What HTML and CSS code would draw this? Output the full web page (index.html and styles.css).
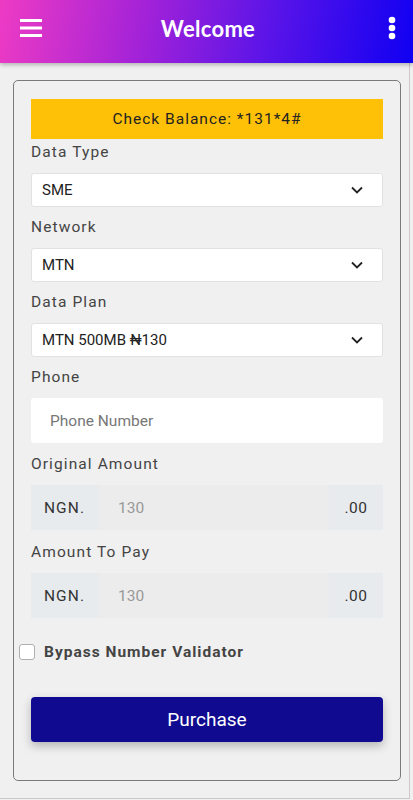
FILE: index.html
```html
<!DOCTYPE html>
<html lang="en">
  <head>
    <meta charset="UTF-8" />
    <meta name="viewport" content="width=device-width, initial-scale=1.0" />
    <title>Buy Data</title>
    <link rel="stylesheet" href="styles.css">
  </head>
  <body>
    <header class="topbar">
      <span class="menu-btn">
        <svg width="22" height="22" viewBox="0 0 22 22">
          <rect x="0" y="2" width="22" height="3" fill="#fff" />
          <rect x="0" y="9.5" width="22" height="3" fill="#fff" />
          <rect x="0" y="17" width="22" height="3" fill="#fff" />
        </svg>
      </span>
      <h1 class="title">Welcome</h1>
      <span class="more-btn">
        <svg width="8" height="24" viewBox="0 0 8 24">
          <circle cx="4" cy="4" r="3.3" fill="#fff" />
          <circle cx="4" cy="12" r="3.3" fill="#fff" />
          <circle cx="4" cy="20" r="3.3" fill="#fff" />
        </svg>
      </span>
    </header>

    <div class="content">
      <form class="card">
        <div class="balance">Check Balance: *131*4#</div>

        <label class="field-label">Data Type</label>
        <div class="select">
          <span>SME</span>
          <svg class="chevron" width="12" height="8" viewBox="0 0 12 8">
            <path d="M1 1.5 L6 6.5 L11 1.5" fill="none" stroke="#222" stroke-width="1.8" />
          </svg>
        </div>

        <label class="field-label">Network</label>
        <div class="select">
          <span>MTN</span>
          <svg class="chevron" width="12" height="8" viewBox="0 0 12 8">
            <path d="M1 1.5 L6 6.5 L11 1.5" fill="none" stroke="#222" stroke-width="1.8" />
          </svg>
        </div>

        <label class="field-label">Data Plan</label>
        <div class="select">
          <span>MTN 500MB ₦130</span>
          <svg class="chevron" width="12" height="8" viewBox="0 0 12 8">
            <path d="M1 1.5 L6 6.5 L11 1.5" fill="none" stroke="#222" stroke-width="1.8" />
          </svg>
        </div>

        <label class="field-label">Phone</label>
        <input class="phone" type="text" placeholder="Phone Number" />

        <label class="field-label">Original Amount</label>
        <div class="amount">
          <span class="prefix">NGN.</span>
          <span class="value">130</span>
          <span class="suffix">.00</span>
        </div>

        <label class="field-label">Amount To Pay</label>
        <div class="amount">
          <span class="prefix">NGN.</span>
          <span class="value">130</span>
          <span class="suffix">.00</span>
        </div>

        <label class="bypass">
          <span class="checkbox"></span>
          Bypass Number Validator
        </label>

        <button type="button" class="purchase">Purchase</button>
      </form>
    </div>
  </body>
</html>
```

FILE: styles.css
```css
body {
  margin: 0;
  padding: 0;
  background-color: #f0f0f0;
  font-family: "Roboto", "Noto Sans", sans-serif;
}

.topbar {
  height: 63px;
  display: flex;
  align-items: center;
  justify-content: space-between;
  padding: 0 20px 7px 20px;
  box-sizing: border-box;
  background: linear-gradient(100deg, #ee3bc4 0%, #a222d8 35%, #5a14e8 65%, #1000f2 100%);
  box-shadow: 0 2px 4px rgba(0, 0, 0, 0.25);
  position: relative;
  z-index: 1;
}

.menu-btn,
.more-btn {
  display: flex;
  width: 24px;
}

.more-btn {
  justify-content: flex-end;
  margin-right: -3px;
}

.title {
  margin: 0;
  color: #fff;
  font-family: "Lato", sans-serif;
  font-weight: 700;
  font-size: 22px;
  letter-spacing: 0.3px;
}

.content {
  width: 410px;
  height: 736px;
  box-sizing: border-box;
  border-right: 1px solid #c9c9c9;
  border-bottom: 1px solid #c9c9c9;
  padding: 17px 0 0 13px;
}

.card {
  width: 388px;
  box-sizing: border-box;
  border: 1px solid #7a7a7a;
  border-radius: 5px;
  padding: 18px 17px 38px 17px;
  display: flex;
  flex-direction: column;
}

.balance {
  height: 40px;
  display: flex;
  align-items: center;
  justify-content: center;
  background-color: #ffc107;
  color: #222;
  font-size: 15.5px;
  letter-spacing: 1px;
}

.field-label {
  display: block;
  height: 22px;
  line-height: 22px;
  margin-top: 2px;
  margin-bottom: 10px;
  font-size: 15.5px;
  color: #444;
  letter-spacing: 1.1px;
}

.select {
  height: 34px;
  display: flex;
  align-items: center;
  justify-content: space-between;
  padding: 0 19px 0 10px;
  margin-bottom: 7px;
  background-color: #fff;
  border: 1px solid #e2e2e2;
  border-radius: 3px;
  box-sizing: border-box;
  font-size: 15px;
  color: #222;
}

.phone {
  height: 45px;
  margin: 0 0 8px 0;
  padding: 0 19px;
  border: none;
  border-radius: 3px;
  background-color: #fff;
  box-sizing: border-box;
  font-family: inherit;
  font-size: 15.5px;
}

.phone::placeholder {
  color: #777;
}

.amount {
  height: 45px;
  flex-shrink: 0;
  display: flex;
  margin-bottom: 9px;
  font-size: 15.5px;
}

.prefix,
.suffix {
  display: flex;
  align-items: center;
  justify-content: center;
  background-color: #e8ebee;
  color: #333;
  letter-spacing: 1.1px;
}

.prefix {
  width: 67px;
}

.suffix {
  width: 54px;
  letter-spacing: 0.5px;
}

.value {
  flex: 1;
  display: flex;
  align-items: center;
  padding-left: 20px;
  background-color: #ececec;
  color: #999;
}

.bypass {
  display: flex;
  align-items: center;
  margin: 14px 0 0 -12px;
  height: 22px;
  font-size: 15.5px;
  font-weight: bold;
  color: #444;
  letter-spacing: 1px;
}

.checkbox {
  width: 14px;
  height: 14px;
  margin-right: 9px;
  background-color: #fff;
  border: 1px solid #b0b0b0;
  border-radius: 3px;
}

.purchase {
  height: 45px;
  flex-shrink: 0;
  margin-top: 34px;
  border: none;
  border-radius: 4px;
  background-color: #100a90;
  color: #fff;
  font-family: inherit;
  font-size: 19px;
  box-shadow: 0 4px 10px rgba(0, 0, 0, 0.25);
}
```
